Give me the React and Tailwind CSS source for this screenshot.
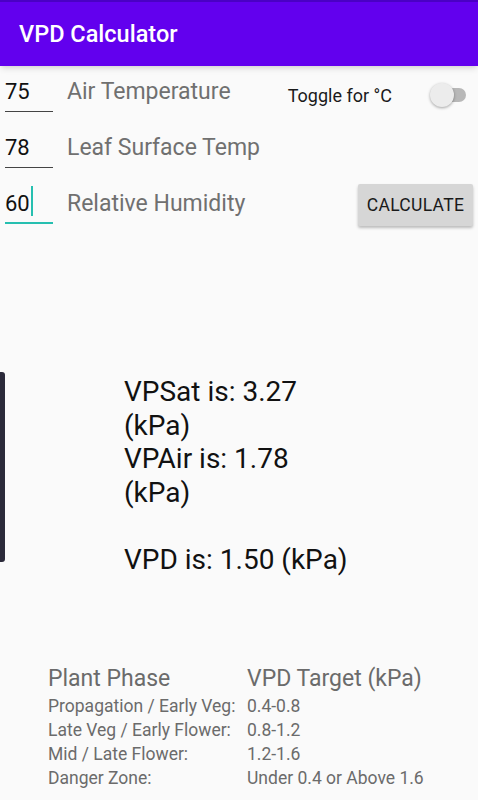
export default function App() {
  const phases = [
    ['Propagation / Early Veg:', '0.4-0.8'],
    ['Late Veg / Early Flower:', '0.8-1.2'],
    ['Mid / Late Flower:', '1.2-1.6'],
    ['Danger Zone:', 'Under 0.4 or Above 1.6'],
  ];

  return (
    <div className="relative h-[800px] w-[478px] overflow-hidden bg-[#fafafa]" style={{ fontFamily: 'Roboto, "Noto Sans", sans-serif' }}>
      {/* App bar */}
      <div className="h-[66px] border-t-2 border-[#4a00c4] bg-[#6200ee] shadow-md flex items-center px-[19px]">
        <h1 className="text-[23.5px] font-medium text-white mt-[2px]">VPD Calculator</h1>
      </div>

      {/* Inputs */}
      <div className="flex">
        <div className="flex flex-col">
          <div className="flex h-[56px] items-start">
            <div className="ml-[5px] w-[48px] h-[46px] border-b border-[#444] flex items-end pb-[3px] text-[22px] text-[#111]">75</div>
            <div className="ml-[14px] text-[23px] text-[#707070] mt-[9px]">Air Temperature</div>
          </div>
          <div className="flex h-[56px] items-start">
            <div className="ml-[5px] w-[48px] h-[46px] border-b border-[#444] flex items-end pb-[3px] text-[22px] text-[#111]">78</div>
            <div className="ml-[14px] text-[23px] text-[#707070] mt-[9px]">Leaf Surface Temp</div>
          </div>
          <div className="flex h-[56px] items-start">
            <div className="ml-[5px] w-[48px] h-[46px] border-b-2 border-[#26bfb0] flex items-end pb-[2px] text-[22px] text-[#111]">
              60<span className="ml-px mb-[4px] inline-block h-[30px] w-[2px] bg-[#26bfb0]"></span>
            </div>
            <div className="ml-[14px] text-[23px] text-[#707070] mt-[9px]">Relative Humidity</div>
          </div>
        </div>

        <div className="ml-auto flex flex-col items-end">
          <div className="flex h-[56px] items-center pr-[12px]">
            <span className="text-[18px] text-[#1a1a1a] mr-[40px] mt-[2px]">Toggle for °C</span>
            <div className="relative h-[14px] w-[34px] rounded-full bg-[#b8b8b8] mt-[2px]">
              <div className="absolute -left-[2px] -top-[5px] h-[24px] w-[24px] rounded-full bg-[#ececec] shadow-[0_1px_3px_rgba(0,0,0,0.35)]"></div>
            </div>
          </div>
          <div className="h-[56px]"></div>
          <div className="flex h-[56px] items-start pr-[5px]">
            <button className="mt-[6px] h-[42px] w-[115px] rounded-[2px] bg-[#d6d6d6] text-[17.5px] tracking-[0.3px] text-[#1a1a1a] shadow-[0_2px_3px_rgba(0,0,0,0.25)]">
              CALCULATE
            </button>
          </div>
        </div>
      </div>

      {/* Side handle */}
      <div className="absolute left-0 top-[372px] h-[190px] w-[5px] rounded-r-[3px] bg-[#2b2a3a]"></div>

      {/* Results */}
      <div className="mt-[141px] ml-[124px] text-[28px] leading-[33.5px] text-[#111]">
        <div>VPSat is: 3.27</div>
        <div>(kPa)</div>
        <div>VPAir is: 1.78</div>
        <div>(kPa)</div>
        <div>&nbsp;</div>
        <div>VPD is: 1.50 (kPa)</div>
      </div>

      {/* Target table */}
      <div className="mt-[88px] ml-[48px] text-[#6b6b6b]">
        <div className="flex text-[23px] leading-[30px]">
          <div className="w-[199px]">Plant Phase</div>
          <div>VPD Target (kPa)</div>
        </div>
        {phases.map(([p, v]) => (
          <div key={p} className="flex text-[17.5px] leading-[24px]">
            <div className="w-[199px]">{p}</div>
            <div>{v}</div>
          </div>
        ))}
      </div>
    </div>
  );
}
